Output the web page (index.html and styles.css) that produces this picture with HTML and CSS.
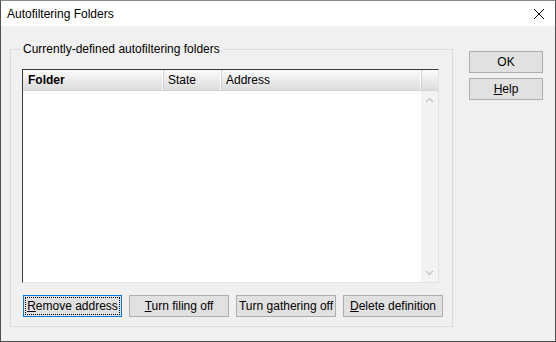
FILE: index.html
```html
<!DOCTYPE html>
<html>
<head>
    <title>Autofiltering Folders</title>
    <link rel="stylesheet" href="styles.css">
</head>
<body>
    <div class="window">
        <div class="titlebar">
            <span class="title">Autofiltering Folders</span>
            <svg class="close" width="12" height="12" viewBox="0 0 12 12">
                <path d="M1 1 L11 11 M11 1 L1 11" stroke="#000" stroke-width="1" fill="none"/>
            </svg>
        </div>
        <div class="content">
            <div class="group">
                <span class="legend">Currently-defined autofiltering folders</span>
                <div class="listview">
                    <div class="header">
                        <div class="col col-folder">Folder</div>
                        <div class="col col-state">State</div>
                        <div class="col col-address">Address</div>
                        <div class="col col-filler"></div>
                    </div>
                    <div class="list-body">
                        <div class="rows"></div>
                        <div class="scrollbar">
                            <svg width="9" height="6" viewBox="0 0 9 6"><path d="M1 5 L4.5 1.5 L8 5" stroke="#c2c2c2" stroke-width="1.3" fill="none"/></svg>
                            <svg width="9" height="6" viewBox="0 0 9 6"><path d="M1 1 L4.5 4.5 L8 1" stroke="#c2c2c2" stroke-width="1.3" fill="none"/></svg>
                        </div>
                    </div>
                </div>
                <div class="actions">
                    <button class="btn btn-wide focused"><span class="focus-ring"><u>R</u>emove address</span></button>
                    <button class="btn btn-wide"><u>T</u>urn filing off</button>
                    <button class="btn btn-wide">Turn <u>g</u>athering off</button>
                    <button class="btn btn-wide"><u>D</u>elete definition</button>
                </div>
            </div>
            <div class="side">
                <button class="btn btn-side">OK</button>
                <button class="btn btn-side"><u>H</u>elp</button>
            </div>
        </div>
    </div>
</body>
</html>
```

FILE: styles.css
```css
body {
    margin: 0;
    background: #f0f0f0;
    font-family: 'Liberation Sans', Arial, sans-serif;
    font-size: 12px;
    color: #000;
}
.window {
    width: 556px;
    height: 342px;
    box-sizing: border-box;
    border: 1px solid #4f4f4f;
    border-top-color: #8a8a8a;
    background: #f0f0f0;
    display: flex;
    flex-direction: column;
}
.titlebar {
    height: 25px;
    background: #fff;
    display: flex;
    align-items: center;
    justify-content: space-between;
    padding: 0 10px 0 6px;
}
.title {
    font-size: 12px;
}
.close {
    display: block;
}
.content {
    display: flex;
    align-items: flex-start;
    padding: 23px 0 0 9px;
}
.group {
    position: relative;
    width: 441px;
    height: 276px;
    border: 1px solid #dcdcdc;
    padding: 19px 0 0 11px;
    box-sizing: content-box;
}
.group {
    width: 430px;
    height: 257px;
}
.legend {
    position: absolute;
    top: -8px;
    left: 9px;
    padding: 0 3px;
    background: #f0f0f0;
    line-height: 14px;
}
.listview {
    width: 415px;
    height: 212px;
    border: 1px solid #e3e3e3;
    border-top-color: #3c3c3c;
    border-left-color: #3c3c3c;
    background: #fff;
    display: flex;
    flex-direction: column;
}
.header {
    display: flex;
    height: 20px;
    background: linear-gradient(#fbfbfb, #dcdcdc);
    border-bottom: 1px solid #d5d5d5;
}
.col {
    line-height: 20px;
    padding-left: 5px;
    border-right: 1px solid #fff;
    box-shadow: 1px 0 0 #d0d0d0;
    box-sizing: border-box;
}
.col-folder {
    width: 140px;
    font-weight: bold;
}
.col-state {
    width: 58px;
}
.col-address {
    width: 200px;
}
.col-filler {
    flex: 1;
    border-right: none;
    box-shadow: none;
}
.list-body {
    flex: 1;
    display: flex;
}
.rows {
    flex: 1;
}
.scrollbar {
    width: 17px;
    background: #f3f3f3;
    display: flex;
    flex-direction: column;
    justify-content: space-between;
    align-items: center;
    padding: 6px 0 6px;
}
.scrollbar svg {
    display: block;
}
.actions {
    display: flex;
    gap: 7px;
    margin: 12px 0 0 1px;
}
.btn {
    font-family: inherit;
    font-size: 12px;
    color: #000;
    background: #e1e1e1;
    border: 1px solid #adadad;
    border-radius: 0;
    height: 22px;
    padding: 0;
    margin: 0;
}
.btn-wide {
    width: 100px;
}
.btn-wide.focused {
    width: 99px;
    border-color: #0078d7;
    padding: 1px;
}
.focus-ring {
    display: flex;
    align-items: center;
    justify-content: center;
    height: 100%;
    box-sizing: border-box;
    outline: 1px dotted #000;
    outline-offset: -1px;
}
.side {
    display: flex;
    flex-direction: column;
    gap: 5px;
    margin: 2px 0 0 16px;
}
.btn-side {
    width: 74px;
}
```
